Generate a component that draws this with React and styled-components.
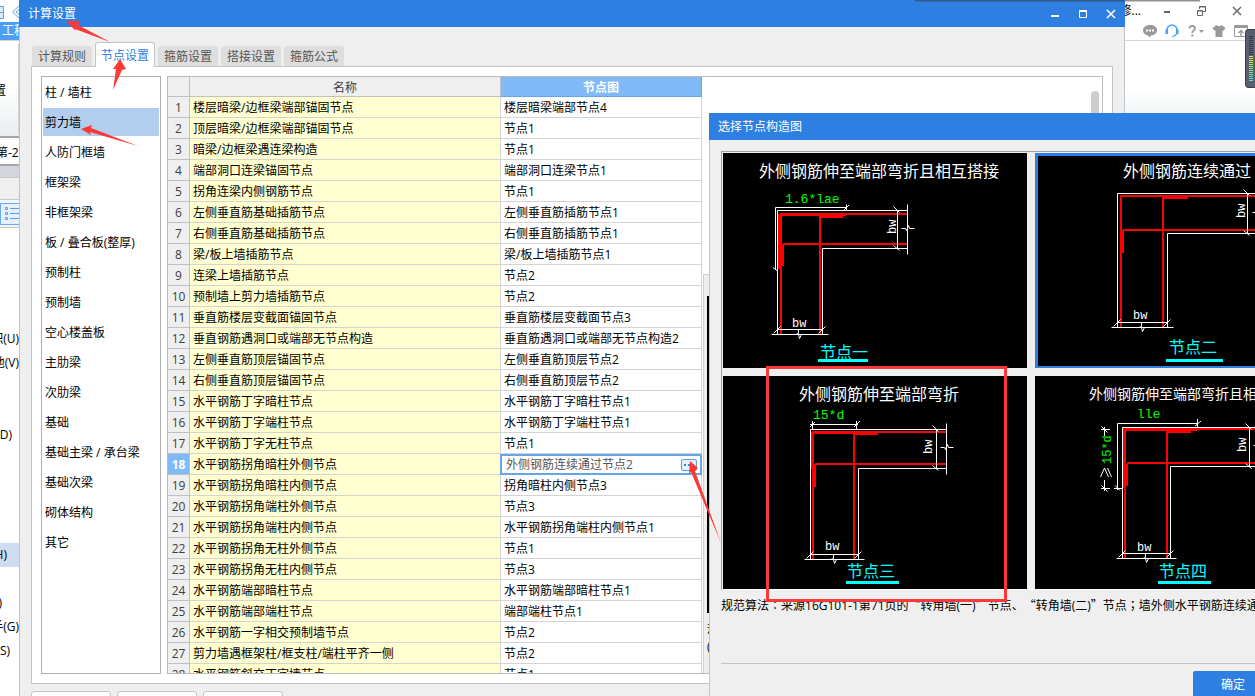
import React, {useState} from 'react';
import styled, {createGlobalStyle, css} from 'styled-components';

const uiFont = '"Open Sans", "Noto Sans CJK SC", sans-serif';
const cadFont = '"Liberation Mono", "Noto Sans CJK SC", monospace';

const GlobalStyle = createGlobalStyle`
  * {
    box-sizing: border-box;
  }
  body {
    margin: 0;
    font-family: ${uiFont};
    font-size: 12px;
    line-height: 20px;
    color: #000000;
  }
  button, input {
    font: inherit;
    color: inherit;
    padding: 0;
    margin: 0;
    border: none;
    background: none;
  }
`;

const Desktop = styled.div`
  position: relative;
  height: 100vh;
  overflow: hidden;
  background: #ffffff;
`;

// Main application window
const HostTop = styled.div`
  display: flex;
  justify-content: space-between;
  align-items: center;
  height: 22px;
  padding-right: 1px;
`;

const HostQuick = styled.div`
  display: flex;
  padding-top: 1px;
`;

const HostTitle = styled.div`
  display: flex;
  align-items: center;
`;

const HostName = styled.span`
  margin-right: 8px;
`;

const WindowButton = styled.button`
  display: flex;
  align-items: center;
  justify-content: center;
  width: ${props => props.$wide ? '35px' : '28px'};
  height: 22px;
`;

const HostMenu = styled.div`
  display: flex;
  justify-content: space-between;
  height: 19px;
  padding-right: 3px;
  border-bottom: 1px solid #d4d4d4;
`;

const HostTab = styled.button`
  width: 60px;
  padding-left: 2px;
  background: #4ba0f5;
  color: #ffffff;
  text-align: left;
  line-height: 18px;
`;

const HostTools = styled.div`
  display: flex;
  align-items: center;
`;

const ToolButton = styled.button`
  display: flex;
  align-items: center;
  justify-content: center;
  width: ${props => props.$wide ? '25px' : '22px'};
  height: 18px;
`;

const Ribbon = styled.div`
  display: flex;
  align-items: center;
  height: 97px;
  background: linear-gradient(#ffffff 50%, #e9edef);
  border-bottom: 2px solid #a4a8ac;
`;

const RibbonLabel = styled.span`
  width: 19px;
  height: 90px;
  padding-top: 37px;
  border-right: 1px solid #cfd3d6;
  direction: rtl;
  padding-right: 12px;
  white-space: nowrap;
  overflow: hidden;
`;

const FloorBar = styled.div`
  height: 28px;
  padding-top: 5px;
  text-indent: -4px;
  border-bottom: 2px solid #a4a8ac;
`;

const GreyBar = styled.div`
  height: ${props => props.$height};
  background: ${props => props.$tone};
  border-bottom: 1px solid #c8c8cc;
`;

const ViewBar = styled.div`
  height: 28px;
  padding-top: 3px;
  background: #f4f4f4;
  border-bottom: 1px solid #c8c8cc;
`;

const ViewButton = styled.button`
  display: flex;
  align-items: center;
  width: 30px;
  height: 22px;
  padding-left: 4px;
  background: #e4f0fd;
  border: 1px solid #6aaaf0;
`;

const ModuleList = styled.div`
  width: 19px;
  padding-top: 99px;
`;

const ModuleItem = styled.div`
  display: flex;
  justify-content: flex-end;
  align-items: center;
  height: 24px;
  overflow: hidden;
  white-space: nowrap;
  padding-right: ${props => props.$inset};
  ${props => props.$active ? 'background: #cddcf2;' : ''}
`;

// Floating windows
const Dialog = styled.section`
  position: absolute;
  isolation: isolate;
  display: flex;
  flex-direction: column;
  background: #efefef;
  border: solid #c0c4d0;
  border-width: 0 1px;
`;

const SettingsDialog = styled(Dialog)`
  top: 0;
  left: 19px;
  right: 130px;
  bottom: -26px;
`;

const PickerDialog = styled(Dialog)`
  top: 113px;
  left: 709px;
  right: -96px;
  bottom: -18px;
`;

const TitleBar = styled.header`
  display: flex;
  justify-content: space-between;
  align-items: center;
  flex: none;
  height: 27px;
  margin: 0 -1px;
  padding-left: 9px;
  background: #2d80e2;
  color: #ffffff;
`;

const TitleText = styled.h1`
  margin: 0;
  padding-top: 1px;
  font-size: 12px;
  font-weight: 400;
`;

const WindowButtons = styled.div`
  display: flex;
`;

const TabBar = styled.div`
  display: flex;
  align-items: flex-end;
  flex: none;
  gap: 3px;
  height: 40px;
  padding-left: 12px;
  margin-bottom: -1px;
  z-index: 1;
`;

const Tab = styled.button`
  width: 60px;
  height: 20px;
  padding-top: 2px;
  margin-bottom: 1px;
  border-radius: 3px 3px 0 0;
  background: #dedede;
  color: #555555;
  text-align: center;
  line-height: 18px;
  white-space: nowrap;
  ${props => props.$active && css`
    height: 25px;
    margin-bottom: 0;
    background: #ffffff;
    border: solid #c0c4cc;
    border-width: 1px 1px 0;
    color: #2d80e2;
  `}
`;

const Pane = styled.div`
  display: flex;
  flex: 1;
  gap: 6px;
  min-height: 0;
  margin: 0 11px;
  padding: 9px;
  background: #ffffff;
  border: 1px solid #c0c4cc;
`;

const CategoryList = styled.ul`
  flex: none;
  width: 120px;
  margin: 0;
  padding: 1px;
  list-style: none;
  border: 1px solid #b0b0b0;
`;

const CategoryItem = styled.li`
  padding-bottom: 2px;
`;

const CategoryButton = styled.button`
  display: block;
  width: 100%;
  height: 28px;
  padding: 2px 0 0 2px;
  text-align: left;
  white-space: nowrap;
  background: ${props => props.$active ? '#b2cdee' : 'transparent'};
`;

const Sheet = styled.div`
  display: flex;
  flex: 1;
  min-width: 0;
  overflow: hidden;
  border: 1px solid #bcbcbc;
`;

const NodeTable = styled.table`
  flex: none;
  align-self: flex-start;
  width: 534px;
  table-layout: fixed;
  border-collapse: separate;
  border-spacing: 0;
  line-height: 18px;
`;

const HeadCell = styled.th`
  width: ${props => props.$width};
  height: 20px;
  padding: 2px 0 0;
  line-height: 17px;
  background: ${props => props.$active ? '#80baf9' : '#efefef'};
  color: ${props => props.$active ? '#ffffff' : '#404040'};
  font-weight: ${props => props.$active ? 700 : 400};
  border: solid ${props => props.$active ? '#66a5e6' : '#c0c0c4'};
  border-width: 0 1px 1px 0;
`;

const IndexCell = styled.th`
  height: 21px;
  padding: 2px 0 0;
  background: ${props => props.$active ? '#80baf9' : '#efefef'};
  color: ${props => props.$active ? '#ffffff' : '#404040'};
  font-weight: ${props => props.$active ? 700 : 400};
  border: solid #c0c0c4;
  border-width: 0 1px 1px 0;
`;

const Cell = styled.td`
  height: 21px;
  padding: 2px 0 0 3px;
  white-space: nowrap;
  background: ${props => props.$name ? '#ffffcf' : '#ffffff'};
  border: solid #d4d4d4;
  border-width: 0 1px 1px 0;
  ${props => props.$editing && css`
    padding: 0;
    border-width: 0;
  `}
`;

const Editor = styled.div`
  display: flex;
  align-items: center;
  height: 21px;
  margin-left: -1px;
  padding: 0 3px 0 4px;
  border: 2px solid #66a5e6;
`;

const EditorInput = styled.input`
  flex: 1;
  min-width: 0;
  height: 17px;
  color: #555555;
  outline: none;
`;

const MoreButton = styled.button`
  display: flex;
  align-items: center;
  justify-content: center;
  width: 16px;
  height: 12px;
  border: 1px solid #5b9fe8;
  border-radius: 2px;
  background: #e4f0fd;
`;

const Preview = styled.div`
  display: flex;
  flex: 1;
  flex-direction: column;
  min-width: 0;
  margin-left: 1px;
`;

const PreviewTop = styled.div`
  display: flex;
  justify-content: flex-end;
  height: 197px;
  padding: 14px 3px 0 0;
`;

const ScrollThumb = styled.div`
  width: 8px;
  border-radius: 4px;
  background: #cdcdcd;
`;

const PreviewBody = styled.div`
  flex: 1;
  padding: 21px 3px 0;
  background: #efefef;
  border: solid #d0d0d0;
  border-width: 1px 0 0 1px;
`;

const PreviewCanvas = styled.div`
  height: 317px;
  background: #000000;
`;

const PreviewNote = styled.p`
  margin: 7px 0 0;
  line-height: 18px;
  white-space: pre-line;
`;

const Footer = styled.footer`
  display: flex;
  flex: none;
  gap: 6px;
  padding: 7px 11px;
`;

const FooterButton = styled.button`
  width: 80px;
  height: 24px;
  background: #ffffff;
  border: 1px solid #c0c4cc;
  border-radius: 3px;
`;

const Gallery = styled.div`
  display: grid;
  flex: none;
  grid-template-columns: repeat(2, 304px);
  grid-template-rows: 215px 213px;
  gap: 8px;
  margin: 11px 11px 0;
  padding: 1px 1px 0;
  border: solid #a0a0a0;
  border-width: 1px 0 0 1px;
  border-bottom: 1px solid #ffffff;
`;

const Card = styled.button`
  position: relative;
  display: flex;
  align-items: flex-start;
  background: #000000;
  overflow: hidden;
  ${props => props.$active && css`
    &::after {
      content: '';
      position: absolute;
      inset: 0;
      border: 3px solid #2d80e2;
      border-bottom-width: 2px;
    }
  `}
`;

const Drawing = styled.svg`
  display: block;
  flex: none;
  width: 304px;
  height: 214px;
  font-family: ${cadFont};
  fill: none;
  stroke: #ffffff;
  stroke-width: 1px;

  text {
    fill: #ffffff;
    stroke: none;
  }
  .green {
    fill: #00ff00;
  }
  .label {
    fill: #00ffff;
    font-size: 16px;
  }
  .under {
    fill: #00ffff;
    stroke: none;
  }
  .steel {
    stroke: #ff0000;
    stroke-width: 2px;
  }
  .lap {
    fill: #ff0000;
    stroke: none;
  }
`;

const Note = styled.p`
  margin: 5px 11px 0;
  flex: 1;
  white-space: nowrap;
  overflow: hidden;
  text-spacing-trim: space-all;
`;

const Quote = styled.span`
  font-family: "Noto Sans CJK SC", sans-serif;
`;

const MidMark = styled.span`
  font-family: "Noto Sans CJK TC", sans-serif;
`;

const Actions = styled.div`
  flex: none;
  height: 51px;
  margin: 0 11px;
  padding: 7px 0 0 472px;
  border-top: 1px solid #c4c4c4;
`;

const PrimaryButton = styled.button`
  width: 80px;
  height: 28px;
  border-radius: 2px;
  background: #2d80e2;
  color: #ffffff;
`;

// Things that float over every window
const Markup = styled.svg`
  position: absolute;
  top: 0;
  left: 0;
  pointer-events: none;
  fill: #fb3a37;
`;

const TopShade = styled.div`
  position: absolute;
  top: 0;
  left: 915px;
  right: 55px;
  height: 2px;
  background: linear-gradient(rgba(60, 60, 60, 0.7), rgba(60, 60, 60, 0.15));
`;

const Meter = styled.div`
  position: absolute;
  top: 29px;
  right: 0;
  display: flex;
  flex-direction: column;
  gap: 1px;
  width: 10px;
  height: 59px;
  padding: 6px 2px 0 3px;
  border: 1px solid #3c404c;
  border-right: none;
  border-radius: 4px 0 0 4px;
  background: #5a5f70;
`;

const MeterBar = styled.i`
  flex: none;
  height: 1px;
  background: ${props => props.$tone};
`;

const tabs = ['计算规则', '节点设置', '箍筋设置', '搭接设置', '箍筋公式'];

const categories = [
  '柱 / 墙柱', '剪力墙', '人防门框墙', '框架梁', '非框架梁', '板 / 叠合板(整厚)', '预制柱', '预制墙',
  '空心楼盖板', '主肋梁', '次肋梁', '基础', '基础主梁 / 承台梁', '基础次梁', '砌体结构', '其它',
];

const nodes = [
  ['楼层暗梁/边框梁端部锚固节点', '楼层暗梁端部节点4'],
  ['顶层暗梁/边框梁端部锚固节点', '节点1'],
  ['暗梁/边框梁遇连梁构造', '节点1'],
  ['端部洞口连梁锚固节点', '端部洞口连梁节点1'],
  ['拐角连梁内侧钢筋节点', '节点1'],
  ['左侧垂直筋基础插筋节点', '左侧垂直筋插筋节点1'],
  ['右侧垂直筋基础插筋节点', '右侧垂直筋插筋节点1'],
  ['梁/板上墙插筋节点', '梁/板上墙插筋节点1'],
  ['连梁上墙插筋节点', '节点2'],
  ['预制墙上剪力墙插筋节点', '节点2'],
  ['垂直筋楼层变截面锚固节点', '垂直筋楼层变截面节点3'],
  ['垂直钢筋遇洞口或端部无节点构造', '垂直筋遇洞口或端部无节点构造2'],
  ['左侧垂直筋顶层锚固节点', '左侧垂直筋顶层节点2'],
  ['右侧垂直筋顶层锚固节点', '右侧垂直筋顶层节点2'],
  ['水平钢筋丁字暗柱节点', '水平钢筋丁字暗柱节点1'],
  ['水平钢筋丁字端柱节点', '水平钢筋丁字端柱节点1'],
  ['水平钢筋丁字无柱节点', '节点1'],
  ['水平钢筋拐角暗柱外侧节点', '外侧钢筋连续通过节点2'],
  ['水平钢筋拐角暗柱内侧节点', '拐角暗柱内侧节点3'],
  ['水平钢筋拐角端柱外侧节点', '节点3'],
  ['水平钢筋拐角端柱内侧节点', '水平钢筋拐角端柱内侧节点1'],
  ['水平钢筋拐角无柱外侧节点', '节点1'],
  ['水平钢筋拐角无柱内侧节点', '节点3'],
  ['水平钢筋端部暗柱节点', '水平钢筋端部暗柱节点1'],
  ['水平钢筋端部端柱节点', '端部端柱节点1'],
  ['水平钢筋一字相交预制墙节点', '节点2'],
  ['剪力墙遇框架柱/框支柱/端柱平齐一侧', '节点2'],
  ['水平钢筋斜交丁字墙节点', '节点1'],
];

const modules = [
  ['积(U)', '0px'], ['他(V)', '0px'], [], [], ['D)', '7px'], [], [], [], [],
  ['H)', '12px', true], [], [')', '17px'], ['手(G)', '0px'], ['S)', '9px'],
];

const meterTones = [
  ...Array(10).fill('#363a46'),
  '#e6e04a', '#dce04e', '#cce054', '#bce25e', '#a8e468', '#98e474', '#88e684',
  '#7ce694', '#70e6a4', '#66e6b2', '#5ee4be', '#5ae2c8', '#58e0d0',
];

// o = outer wall corner, i = inner wall corner, bar = the steel lines
const cards = [
  {
    title: '外侧钢筋伸至端部弯折且相互搭接', titleX: 36, titleSize: 16,
    o: [54.5, 57.5], i: [99.5, 95.5], end: 184.5, bottom: 181.5, dimX: 174.5,
    bar: {x1: 58, x2: 97, y1: 61, y2: 91},
    laps: [[56, 60, 67, 3], [96, 63, 24, 2], [55, 61, 4, 55], [58, 91, 3, 22]],
    bw: [69, 174], bwSide: [173, 81], label: '节点一', labelX: 97, labelY: 205, under: [95, 206, 50],
  },
  {
    title: '外侧钢筋连续通过', titleX: 88, titleSize: 16,
    o: [82.5, 40.5], i: [132.5, 80.5], end: 223.5, bottom: 174.5, dimX: 212.5,
    bar: {x1: 86, x2: 128, y1: 43, y2: 77},
    laps: [[128, 43, 25, 3], [86, 77, 3, 23]],
    bw: [98, 166], bwSide: [210, 65], label: '节点二', labelX: 134, labelY: 200, under: [131, 206, 57],
  },
  {
    title: '外侧钢筋伸至端部弯折', titleX: 76, titleSize: 16,
    o: [87.5, 53.5], i: [135.5, 92.5], end: 223.5, bottom: 183.5, dimX: 213.5,
    bar: {x1: 90, x2: 131, y1: 56, y2: 88},
    laps: [[89, 55, 44, 3], [131, 57, 24, 2], [88, 56, 3, 37], [90, 88, 3, 23]],
    bw: [102, 174], bwSide: [209, 78], label: '节点三', labelX: 124, labelY: 201, under: [123, 205, 53],
  },
  {
    title: '外侧钢筋伸至端部弯折且相互搭接', titleX: 54, titleSize: 14,
    o: [87.5, 51.5], i: [135.5, 90.5], end: 224.5, bottom: 182.5, dimX: 214.5,
    bar: {x1: 90, x2: 132, y1: 53, y2: 87},
    laps: [[88, 52, 74, 3], [132, 54, 24, 3], [88, 53, 3, 59], [90, 88, 3, 22]],
    bw: [102, 175], bwSide: [211, 76], label: '节点四', labelX: 124, labelY: 201, under: [123, 205, 53],
  },
];

const Extras = ({index}) => {
  if (index === 0) {
    return (
      <g>
        <path d="M52.5 117V54.5H123.5M123.5 51.5V57M121 57l5-5M50 114.5l5 4" />
        <text className="green" x="62" y="50" fontSize="13">1.6*lae</text>
      </g>
    );
  }
  if (index === 2) {
    return (
      <g>
        <path d="M87 48.5H135M89.5 45V53M133.5 45V53M87 51l5-5M131 51l6-6" />
        <text className="green" x="90" y="43" fontSize="13">15*d</text>
      </g>
    );
  }
  if (index === 3) {
    return (
      <g>
        <path d="M82.5 114V47.5H162.5M162.5 43V51M160 50l6-5M80 109.5l5 5M79 112.5H88" />
        <path d="M66 53.5H75M69.5 51V60M66.5 50.5l6 6M66 112.5H75M69.5 104V115M66.5 109.5l6 6" />
        <path d="M65.5 101l4-9l4 9M72.5 92l4 9" />
        <text className="green" transform="translate(76 88) rotate(-90)" fontSize="12">15*d</text>
        <text className="green" x="102" y="42" fontSize="13">lle</text>
      </g>
    );
  }
  return null;
};

const NodeDrawing = ({card, index}) => {
  const {o, i, end, bottom, dimX, bar} = card;
  const midY = Math.round((o[1] + i[1]) / 2) - 2;
  const midX = Math.round((o[0] + i[0]) / 2) - 2;
  const dimY = bottom - 5;
  return (
    <Drawing viewBox="0 0 304 214" aria-label={card.label}>
      <text x={card.titleX} y={index === 3 ? 23 : 24} fontSize={card.titleSize}>{card.title}</text>
      <path className="steel" d={`M${bar.x1} ${bottom}V${bar.y1}H${end}M${bar.x1 + 2} ${bar.y2}H${end}M${bar.x2} ${bottom}V${bar.y1 + 1}`} />
      {card.laps.map(([x, y, w, h]) => <rect key={`${x}-${y}`} className="lap" x={x} y={y} width={w} height={h} />)}
      <path d={`M${o[0]} ${bottom}V${o[1]}H${end}M${i[0]} ${bottom}V${i[1]}H${end}`} />
      <path d={`M${end} ${o[1] - 6}V${i[1] + 6}M${end - 6} ${midY + 0.5}h4l1 2l2 -5l1 3h5`} />
      <path d={`M${dimX} ${o[1]}V${i[1]}M${dimX - 4} ${o[1] - 4}l6 6M${dimX - 4} ${i[1] - 3}l6 5`} />
      <path d={`M${o[0] - 6} ${bottom}H${i[0] + 6}M${o[0]} ${dimY}H${i[0]}M${o[0] - 4} ${dimY + 4}l7-7M${i[0] - 4} ${dimY + 4}l7-7`} />
      <path d={`M${midX + 0.5} ${dimY}v4l-3 1M${midX + 0.5} ${bottom}l1 4l2-4`} />
      <text x={card.bw[0]} y={card.bw[1]} fontSize="12">bw</text>
      <text transform={`translate(${card.bwSide[0]} ${card.bwSide[1]}) rotate(-90)`} fontSize="12">bw</text>
      <Extras index={index} />
      <text className="label" x={card.labelX} y={card.labelY}>{card.label}</text>
      <rect className="under" x={card.under[0]} y={card.under[1]} width={card.under[2]} height="3" />
    </Drawing>
  );
};

const Host = () => (
  <div>
    <HostTop>
      <HostQuick>
        <svg width="19" height="18" viewBox="0 0 19 18" fill="none" stroke="#5b9fe8">
          <path d="M0 3.5H3.5V15.5H0M0 9.5H3" fill="#dcebfb" />
          <path d="M19 3L12.5 9L19 15M19 6.5L16 9L19 11.5" />
        </svg>
      </HostQuick>
      <HostTitle>
        <HostName>修...</HostName>
        <WindowButton $wide aria-label="最小化">
          <svg width="12" height="12"><rect x="3" y="6" width="6" height="2" fill="#666666" /></svg>
        </WindowButton>
        <WindowButton $wide aria-label="还原">
          <svg width="12" height="12" fill="none" stroke="#666666">
            <path d="M3.5 4V1.5H9.5V6.5H7M3 2H10M1.5 5.5H6.5V10.5H1.5ZM1 6H7" />
          </svg>
        </WindowButton>
        <WindowButton $wide aria-label="关闭">
          <svg width="12" height="12" stroke="#666666" strokeWidth="1.4"><path d="M2 2l8 8M10 2l-8 8" /></svg>
        </WindowButton>
      </HostTitle>
    </HostTop>
    <HostMenu>
      <HostTab>工程</HostTab>
      <HostTools>
        <ToolButton aria-label="消息">
          <svg width="14" height="14" viewBox="0 0 14 14">
            <path d="M7 1c4 0 7 2 7 5.3S11 11.5 8 11.5L6.5 13.5L5 11.5C2 11 0 9 0 6.3S3 1 7 1z" fill="#999999" />
            <path d="M3 5.5h2v2H3zM6 5.5h2v2H6zM9 5.5h2v2H9z" fill="#ffffff" />
          </svg>
        </ToolButton>
        <ToolButton aria-label="客服">
          <svg width="14" height="14" viewBox="0 0 14 14" fill="none" stroke="#4ba0f5">
            <path d="M2 8V6a5 5 0 0 1 10 0V8" strokeWidth="1.6" />
            <path d="M1.8 5.5v4.5M12.2 5.5v4.5" strokeWidth="2.6" />
            <path d="M11.5 10c-1 2-2 2.5-4 2.5" strokeWidth="1.4" />
          </svg>
        </ToolButton>
        <ToolButton $wide aria-label="帮助">
          <svg width="18" height="14" viewBox="0 0 18 14">
            <path d="M2.5 4.5C2.5 1 8 1 8 4.2C8 6.3 5.3 6.5 5.3 9" fill="none" stroke="#999999" strokeWidth="1.9" />
            <path d="M4.3 10.5h2v2h-2zM12 6h5l-2.5 3z" fill="#999999" />
          </svg>
        </ToolButton>
        <ToolButton aria-label="皮肤">
          <svg width="14" height="14" viewBox="0 0 14 14">
            <path d="M4.5 1C5.5 2.5 8.5 2.5 9.5 1L13.5 4L11.5 7L10.5 6.3V13H3.5V6.3L2.5 7L.5 4z" fill="#999999" />
          </svg>
        </ToolButton>
        <ToolButton aria-label="收起">
          <svg width="14" height="14" viewBox="0 0 14 14" fill="none" stroke="#999999">
            <path d="M.5 12.5V1.5H13.5V12.5zM1 2.5H13M1 3.5H13" />
            <path d="M7 12V7M4.5 9L7 6.5L9.5 9" strokeWidth="1.4" />
          </svg>
        </ToolButton>
      </HostTools>
    </HostMenu>
    <Ribbon><RibbonLabel>置</RibbonLabel></Ribbon>
    <FloorBar>第-2</FloorBar>
    <GreyBar $height="12px" $tone="#d4d4dc" />
    <GreyBar $height="22px" $tone="#efefef" />
    <ViewBar>
      <ViewButton aria-label="列表">
        <svg width="14" height="16" fill="none" stroke="#5b9fe8">
          <path d="M.5 1.5h2v2h-2zM.5 6.5h2v2h-2zM.5 11.5h2v2h-2zM5 2.5h9M5 7.5h9M5 12.5h9" />
        </svg>
      </ViewButton>
    </ViewBar>
    <ModuleList>
      {modules.map(([name, inset, active], index) => (
        <ModuleItem key={index} $inset={inset || '0px'} $active={active}>{name}</ModuleItem>
      ))}
    </ModuleList>
  </div>
);

const Settings = () => {
  const [tab, setTab] = useState(1);
  const [category, setCategory] = useState(1);
  const [editing] = useState(17);

  return (
    <SettingsDialog>
      <TitleBar>
        <TitleText>计算设置</TitleText>
        <WindowButtons>
          <WindowButton aria-label="最小化">
            <svg width="12" height="12"><rect x="2" y="7" width="8" height="2" fill="#ffffff" /></svg>
          </WindowButton>
          <WindowButton aria-label="最大化">
            <svg width="12" height="12" fill="none" stroke="#ffffff"><path d="M2.5 3.5h7v6h-7zM2 2.5h8" /></svg>
          </WindowButton>
          <WindowButton aria-label="关闭">
            <svg width="12" height="12" stroke="#ffffff" strokeWidth="1.6"><path d="M2 2l8 8M10 2l-8 8" /></svg>
          </WindowButton>
        </WindowButtons>
      </TitleBar>
      <TabBar role="tablist">
        {tabs.map((name, index) => (
          <Tab key={name} role="tab" aria-selected={tab === index} $active={tab === index} onClick={() => setTab(index)}>
            {name}
          </Tab>
        ))}
      </TabBar>
      <Pane>
        <CategoryList>
          {categories.map((name, index) => (
            <CategoryItem key={name}>
              <CategoryButton $active={category === index} onClick={() => setCategory(index)}>{name}</CategoryButton>
            </CategoryItem>
          ))}
        </CategoryList>
        <Sheet>
          <NodeTable>
            <thead>
              <tr>
                <HeadCell $width="22px" />
                <HeadCell $width="311px">名称</HeadCell>
                <HeadCell $width="201px" $active>节点图</HeadCell>
              </tr>
            </thead>
            <tbody>
              {nodes.map(([name, value], index) => (
                <tr key={name}>
                  <IndexCell $active={editing === index}>{index + 1}</IndexCell>
                  <Cell $name>{name}</Cell>
                  <Cell $editing={editing === index}>
                    {editing === index ?
                      <Editor>
                        <EditorInput aria-label={name} defaultValue={value} />
                        <MoreButton aria-label="选择节点构造图">
                          <svg width="10" height="2" fill="#3f86d8"><path d="M0 0h2v2H0zM4 0h2v2H4zM8 0h2v2H8z" /></svg>
                        </MoreButton>
                      </Editor>
                      : value}
                  </Cell>
                </tr>
              ))}
            </tbody>
          </NodeTable>
          <Preview>
            <PreviewTop><ScrollThumb /></PreviewTop>
            <PreviewBody>
              <PreviewCanvas />
              <PreviewNote>{'规\n('}</PreviewNote>
            </PreviewBody>
          </Preview>
        </Sheet>
      </Pane>
      <Footer>
        <FooterButton aria-label="导入规则" />
        <FooterButton aria-label="导出规则" />
        <FooterButton aria-label="恢复默认" />
      </Footer>
    </SettingsDialog>
  );
};

const Picker = () => {
  const [selected, setSelected] = useState(1);

  return (
    <PickerDialog>
      <TitleBar><TitleText>选择节点构造图</TitleText></TitleBar>
      <Gallery>
        {cards.map((card, index) => (
          <Card key={card.label} $active={selected === index} onClick={() => setSelected(index)}>
            <NodeDrawing card={card} index={index} />
          </Card>
        ))}
      </Gallery>
      <Note>
        规范算法<MidMark>：</MidMark>来源16G101-1第71页的<Quote>“</Quote>转角墙(一)<Quote>”</Quote>节点、<Quote>“</Quote>转角墙(二)<Quote>”</Quote>节点<MidMark>；</MidMark>墙外侧水平钢筋连续通过
      </Note>
      <Actions><PrimaryButton>确定</PrimaryButton></Actions>
    </PickerDialog>
  );
};

const App = () => (
  <Desktop>
    <GlobalStyle />
    <Host />
    <Settings />
    <Picker />
    <Markup width="1010" height="610">
      <path d="M66 21L80 21L78 25L110 42L75 29L76 31z" />
      <path d="M120 59L126 69L122 70L113 90L116 69L113 69z" />
      <path d="M81 129L92 125L91 128L138 146L90 132L91 135z" />
      <path d="M690 461L698 468L695 471L721 543L691 472L689 474z" />
      <rect x="767.5" y="367.5" width="238" height="233" fill="none" stroke="#fb3a37" strokeWidth="3" />
    </Markup>
    <TopShade />
    <Meter>
      {meterTones.map((tone, index) => <MeterBar key={index} $tone={tone} />)}
    </Meter>
  </Desktop>
);

export default App;
